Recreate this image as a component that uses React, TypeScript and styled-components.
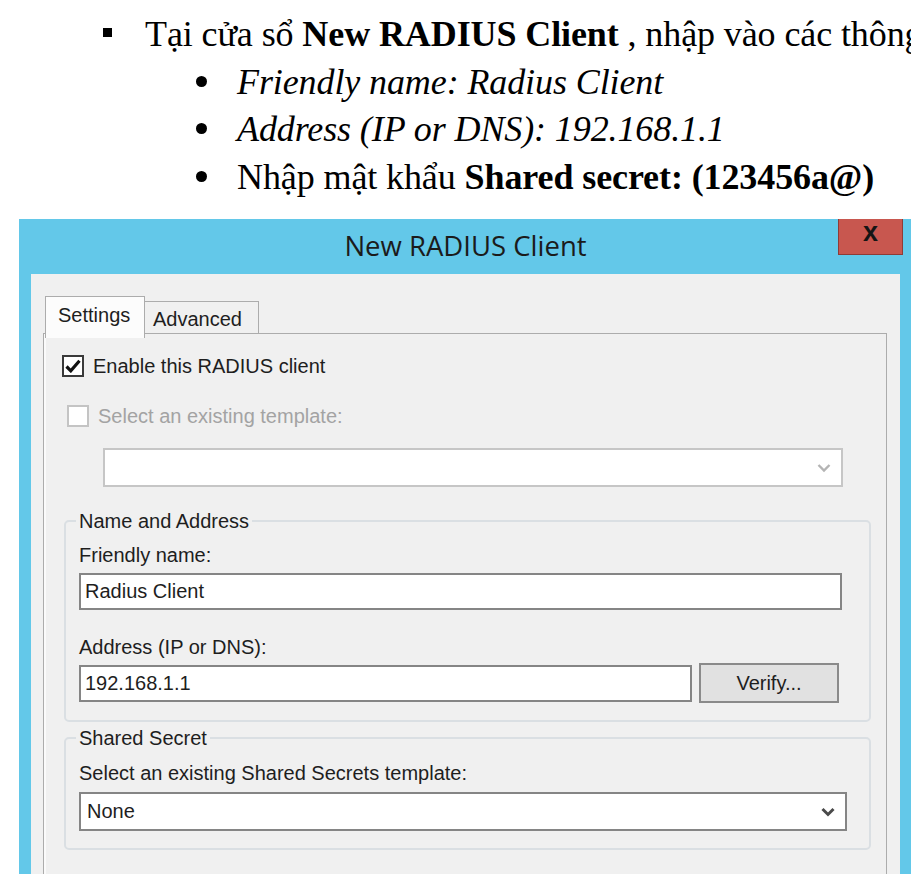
import styled, { createGlobalStyle } from 'styled-components';

const GlobalStyle = createGlobalStyle`
  html,
  body {
    margin: 0;
    padding: 0;
    background: #fff;
  }

  body {
    width: 911px;
    height: 874px;
    overflow: hidden;
  }
`;

const UI_FONT = `"Liberation Sans", Arial, sans-serif`;

const App = () => {
  return (
    <>
      <GlobalStyle />
      <Doc>
        <Item $level={1}>
          <Marker $level={1}>
            <Square />
          </Marker>
          <span>
            Tại cửa sổ <b>New RADIUS Client</b> , nhập vào các thông số sau:
          </span>
        </Item>
        <Item $level={2}>
          <Marker $level={2}>
            <Dot />
          </Marker>
          <i>Friendly name: Radius Client</i>
        </Item>
        <Item $level={2}>
          <Marker $level={2}>
            <Dot />
          </Marker>
          <i>Address (IP or DNS): 192.168.1.1</i>
        </Item>
        <Item $level={2}>
          <Marker $level={2}>
            <Dot />
          </Marker>
          <span>
            Nhập mật khẩu <b>Shared secret: (123456a@)</b>
          </span>
        </Item>
      </Doc>

      <Window>
        <TitleBar>
          <span />
          <Title>New RADIUS Client</Title>
          <CloseButton aria-label="Close">x</CloseButton>
        </TitleBar>

        <Client>
          <TabStrip>
            <Tab $active>Settings</Tab>
            <Tab>Advanced</Tab>
          </TabStrip>

          <Panel>
            <CheckRow>
              <CheckBox>
                <svg width="16" height="14" viewBox="0 0 16 14">
                  <path
                    d="M1.5 7.5 L5.8 11.8 L14.5 1.8"
                    fill="none"
                    stroke="#111"
                    strokeWidth="3.2"
                  />
                </svg>
              </CheckBox>
              <Label>Enable this RADIUS client</Label>
            </CheckRow>

            <CheckRow $indent $gap>
              <CheckBox $disabled />
              <Label $disabled>Select an existing template:</Label>
            </CheckRow>

            <Combo $disabled $width={740} $left={41}>
              <span />
              <Chevron $disabled />
            </Combo>

            <Group $first>
              <Legend>Name and Address</Legend>
              <FieldLabel $top={10}>Friendly name:</FieldLabel>
              <TextBox $width={763} $top={6}>
                Radius Client
              </TextBox>
              <FieldLabel $top={25}>Address (IP or DNS):</FieldLabel>
              <AddressRow>
                <TextBox $width={613}>192.168.1.1</TextBox>
                <Button>Verify...</Button>
              </AddressRow>
            </Group>

            <Group>
              <Legend>Shared Secret</Legend>
              <FieldLabel $top={11}>
                Select an existing Shared Secrets template:
              </FieldLabel>
              <Combo $width={768} $top={7}>
                <span>None</span>
                <Chevron />
              </Combo>
            </Group>
          </Panel>
        </Client>
      </Window>
    </>
  );
};

const Chevron = ({ $disabled }: { $disabled?: boolean }) => (
  <svg width="14" height="10" viewBox="0 0 14 10">
    <path
      d="M1.5 2 L7 7.5 L12.5 2"
      fill="none"
      stroke={$disabled ? '#b4b4b4' : '#4a4a4a'}
      strokeWidth={$disabled ? 2.4 : 3}
    />
  </svg>
);

const Doc = styled.div`
  height: 219px;
  box-sizing: border-box;
  padding-top: 11px;
  font-family: 'Liberation Serif', 'Times New Roman', serif;
  font-size: 36px;
  line-height: 47.5px;
  letter-spacing: -0.1px;
  color: #000;
  white-space: nowrap;
  overflow: hidden;
`;

const Item = styled.div<{ $level: 1 | 2 }>`
  display: flex;
  padding-left: ${({ $level }) => ($level === 1 ? 103 : 196)}px;
`;

const Marker = styled.span<{ $level: 1 | 2 }>`
  flex: none;
  display: flex;
  align-items: center;
  width: ${({ $level }) => ($level === 1 ? 42 : 41)}px;
`;

const Square = styled.span`
  width: 9px;
  height: 9px;
  margin-top: -4px;
  background: #000;
`;

const Dot = styled.span`
  width: 11px;
  height: 11px;
  margin-top: -2px;
  border-radius: 50%;
  background: #000;
`;

const Window = styled.div`
  width: 892px;
  height: 655px;
  margin-left: 19px;
  box-sizing: border-box;
  padding: 0 11px 0 12px;
  background: #63c8e9;
  display: flex;
  flex-direction: column;
`;

const TitleBar = styled.div`
  flex: none;
  height: 55px;
  display: grid;
  grid-template-columns: 1fr auto 1fr;
  align-items: center;
`;

const Title = styled.div`
  font-family: 'Open Sans', 'Noto Sans', sans-serif;
  font-size: 27.5px;
  color: #1b1b1b;
  padding-bottom: 3px;
`;

const CloseButton = styled.div`
  justify-self: end;
  align-self: start;
  margin-right: -3px;
  width: 65px;
  height: 36px;
  box-sizing: border-box;
  border: 1px solid #8f3b36;
  border-top: none;
  background: #c8574f;
  display: flex;
  align-items: center;
  justify-content: center;
  font-family: ${UI_FONT};
  font-size: 27px;
  font-weight: bold;
  line-height: 1;
  color: #151515;
  padding-bottom: 8px;
`;

const Client = styled.div`
  flex: 1;
  background: #f0f0f0;
  padding: 22px 13px 0 12px;
  display: flex;
  flex-direction: column;
`;

const TabStrip = styled.div`
  flex: none;
  height: 37px;
  display: flex;
  align-items: flex-end;
  padding-left: 2px;
`;

const Tab = styled.div<{ $active?: boolean }>`
  position: relative;
  z-index: 1;
  box-sizing: border-box;
  border: 1px solid #acacac;
  border-bottom: none;
  font-family: ${UI_FONT};
  font-size: 20px;
  color: #1e1e1e;
  ${({ $active }) =>
    $active
      ? `
    width: 100px;
    height: 42px;
    margin-bottom: -5px;
    padding: 7px 0 0 12px;
    background: #fcfcfc;
  `
      : `
    width: 114px;
    height: 32px;
    border-left: none;
    padding: 6px 0 0 8px;
    background: #f0f0f0;
  `}
`;

const Panel = styled.div`
  flex: 1;
  border: 1px solid #acacac;
  border-bottom: none;
  box-shadow: inset 2px 0 0 #fafafa;
  background: #f0f0f0;
  padding: 21px 15px 0 18px;
`;

const CheckRow = styled.div<{ $indent?: boolean; $gap?: boolean }>`
  display: flex;
  align-items: center;
  gap: 9px;
  height: 22px;
  margin-left: ${({ $indent }) => ($indent ? 5 : 0)}px;
  margin-top: ${({ $gap }) => ($gap ? 28 : 0)}px;
`;

const CheckBox = styled.span<{ $disabled?: boolean }>`
  flex: none;
  width: 22px;
  height: 22px;
  box-sizing: border-box;
  border: 2px solid ${({ $disabled }) => ($disabled ? '#c4c4c4' : '#3a3a3a')};
  background: #fff;
  display: flex;
  align-items: center;
  justify-content: center;
`;

const Label = styled.span<{ $disabled?: boolean }>`
  font-family: ${UI_FONT};
  font-size: 20px;
  color: ${({ $disabled }) => ($disabled ? '#a3a3a3' : '#1e1e1e')};
`;

const Combo = styled.div<{
  $disabled?: boolean;
  $width: number;
  $left?: number;
  $top?: number;
}>`
  width: ${({ $width }) => $width}px;
  height: 39px;
  box-sizing: border-box;
  margin-left: ${({ $left }) => $left ?? 0}px;
  margin-top: ${({ $top }) => $top ?? 21}px;
  border: 2px solid ${({ $disabled }) => ($disabled ? '#c6c6c6' : '#858585')};
  background: #fff;
  display: flex;
  align-items: center;
  justify-content: space-between;
  padding: 0 10px 0 6px;
  font-family: ${UI_FONT};
  font-size: 20px;
  color: #1e1e1e;
`;

const Group = styled.fieldset<{ $first?: boolean }>`
  margin: ${({ $first }) => ($first ? 22 : 4)}px 0 0 2px;
  width: 807px;
  box-sizing: border-box;
  padding: 0 13px 17px;
  border: 2px solid #dadfe3;
  border-radius: 5px;
  min-width: 0;
`;

const Legend = styled.legend`
  padding: 0 3px;
  margin-left: -3px;
  font-family: ${UI_FONT};
  font-size: 20px;
  line-height: 24px;
  color: #1e1e1e;
`;

const FieldLabel = styled.div<{ $top: number }>`
  margin-top: ${({ $top }) => $top}px;
  font-family: ${UI_FONT};
  font-size: 20px;
  line-height: 24px;
  color: #1e1e1e;
`;

const TextBox = styled.div<{ $width: number; $top?: number }>`
  width: ${({ $width }) => $width}px;
  height: 37px;
  box-sizing: border-box;
  margin-top: ${({ $top }) => $top ?? 0}px;
  border: 2px solid #858585;
  background: #fff;
  padding-left: 4px;
  display: flex;
  align-items: center;
  font-family: ${UI_FONT};
  font-size: 20px;
  color: #1e1e1e;
`;

const AddressRow = styled.div`
  margin-top: 4px;
  height: 40px;
  display: flex;
  align-items: center;
  gap: 7px;
`;

const Button = styled.div`
  width: 140px;
  height: 40px;
  box-sizing: border-box;
  border: 2px solid #8a8a8a;
  background: #e1e1e1;
  display: flex;
  align-items: center;
  justify-content: center;
  font-family: ${UI_FONT};
  font-size: 20px;
  color: #1e1e1e;
`;

export default App;
